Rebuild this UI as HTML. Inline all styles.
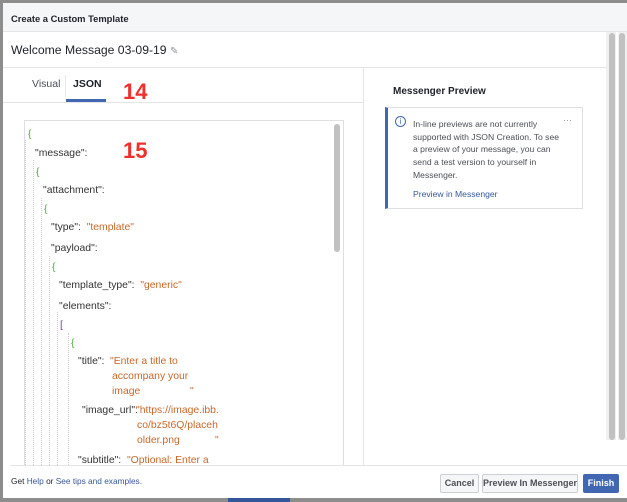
<!DOCTYPE html>
<html><head><meta charset="utf-8"><style>
*{margin:0;padding:0;box-sizing:border-box}
body{width:627px;height:502px;background:#8d8d8d;position:relative;overflow:hidden;font-family:"Liberation Sans",Helvetica,Arial,sans-serif;color:#1d2129}
.a{position:absolute;white-space:nowrap}
.m{position:absolute;left:3px;top:3px;width:624px;height:495px;background:#fff}
.code{font-size:10.4px;color:#333}
.s{color:#c8682b}
.g{color:#4caf3a}
.p{color:#7a3a9a}
.btn{position:absolute;top:474px;height:19px;border:1px solid #ccd0d5;background:#f5f6f7;border-radius:2px;font-size:9px;font-weight:bold;color:#4b4f56;text-align:center;line-height:17px;white-space:nowrap}
.guide{position:absolute;width:0;border-left:1px dotted #ccc}
</style></head><body>
<div class="m"></div>
<div class="a" style="left:3px;top:3px;width:624px;height:29px;background:#f5f6f7;border-bottom:1px solid #e5e5e5"></div>
<div class="a" style="left:11px;top:13px;font-size:9.4px;font-weight:bold;color:#1d2129">Create a Custom Template</div>
<div class="a" style="left:11px;top:43px;font-size:12.2px;color:#1d2129">Welcome Message 03-09-19 <span style="color:#90949c;font-size:10px">✎</span></div>
<div class="a" style="left:3px;top:67px;width:603px;height:1px;background:#e5e5e5"></div>
<div class="a" style="left:363px;top:68px;width:1px;height:397px;background:#e5e5e5"></div>
<div class="a" style="left:3px;top:102px;width:360px;height:1px;background:#e5e5e5"></div>
<div class="a" style="left:32px;top:78px;font-size:10.5px;color:#4b4f56">Visual</div>
<div class="a" style="left:65px;top:75px;width:1px;height:22px;background:#e5e5e5"></div>
<div class="a" style="left:73px;top:78px;font-size:10.5px;font-weight:bold;color:#1d2129">JSON</div>
<div class="a" style="left:66px;top:99px;width:40px;height:3px;background:#4267b2"></div>
<div class="a" style="left:123px;top:79px;font-size:22px;font-weight:bold;color:#f0302c">14</div>
<div class="a" style="left:123px;top:138px;font-size:22px;font-weight:bold;color:#f0302c">15</div>
<div class="a" style="left:24px;top:120px;width:320px;height:346px;border:1px solid #dddfe2;border-bottom:none"></div>
<div class="a" style="left:334px;top:124px;width:6px;height:128px;background:#c1c1c1;border-radius:3px"></div>
<div class="guide" style="left:25px;top:140px;height:325px"></div>
<div class="guide" style="left:33px;top:160px;height:305px"></div>
<div class="guide" style="left:41px;top:198px;height:267px"></div>
<div class="guide" style="left:49px;top:256px;height:209px"></div>
<div class="guide" style="left:57px;top:312px;height:153px"></div>
<div class="guide" style="left:68px;top:333px;height:132px"></div>
<div class="code">
<div class="a g" style="left:28px;top:129px">{</div>
<div class="a" style="left:35px;top:148px">"message":</div>
<div class="a g" style="left:36px;top:167px">{</div>
<div class="a" style="left:43px;top:185px">"attachment":</div>
<div class="a g" style="left:44px;top:204px">{</div>
<div class="a" style="left:51px;top:222px">"type": &nbsp;<span class="s">"template"</span></div>
<div class="a" style="left:51px;top:243px">"payload":</div>
<div class="a g" style="left:52px;top:262px">{</div>
<div class="a" style="left:59px;top:280px">"template_type": &nbsp;<span class="s">"generic"</span></div>
<div class="a" style="left:59px;top:301px">"elements":</div>
<div class="a p" style="left:60px;top:320px">[</div>
<div class="a g" style="left:71px;top:338px">{</div>
<div class="a" style="left:78px;top:356px">"title":</div>
<div class="a s" style="left:110px;top:356px">"Enter a title to</div>
<div class="a s" style="left:112px;top:371px">accompany your</div>
<div class="a s" style="left:112px;top:386px">image</div>
<div class="a s" style="left:190px;top:386px">"</div>
<div class="a" style="left:82px;top:405px">"image_url":</div>
<div class="a s" style="left:136px;top:405px">"https://image.ibb.</div>
<div class="a s" style="left:137px;top:420px">co/bz5t6Q/placeh</div>
<div class="a s" style="left:137px;top:435px">older.png</div>
<div class="a s" style="left:215px;top:435px">"</div>
<div class="a" style="left:78px;top:455px">"subtitle": &nbsp;<span class="s">"Optional: Enter a</span></div>
</div>
<div class="a" style="left:393px;top:86px;font-size:10px;font-weight:bold;color:#1d2129">Messenger Preview</div>
<div class="a" style="left:385px;top:107px;width:198px;height:102px;border:1px solid #dddfe2;border-left:3px solid #4267b2;background:#fff"></div>
<div class="a" style="left:395px;top:116px;width:11px;height:11px;border:1px solid #4267b2;border-radius:50%;font-size:8px;color:#4267b2;text-align:center;line-height:9px">i</div>
<div class="a" style="left:563px;top:115px;font-size:9px;color:#90949c">···</div>
<div class="a" style="left:413px;top:118px;font-size:8.6px;line-height:12.7px;color:#4b4f56;white-space:normal;width:152px">In-line previews are not currently supported with JSON Creation. To see a preview of your message, you can send a test version to yourself in Messenger.</div>
<div class="a" style="left:413px;top:189px;font-size:8.6px;color:#365899">Preview in Messenger</div>
<div class="a" style="left:606px;top:32px;width:21px;height:408px;background:#f0f0f0"></div>
<div class="a" style="left:609px;top:33px;width:6px;height:407px;background:#c1c1c1;border-radius:3px"></div>
<div class="a" style="left:619px;top:33px;width:6px;height:407px;background:#c1c1c1;border-radius:3px"></div>
<div class="a" style="left:616px;top:32px;width:2px;height:408px;background:#fff"></div>
<div class="a" style="left:10px;top:465px;width:617px;height:1px;background:#e5e5e5"></div>
<div class="a" style="left:11px;top:476px;font-size:8.3px;color:#1d2129">Get <span style="color:#365899">Help</span> or <span style="color:#365899">See tips and examples.</span></div>
<div class="btn" style="left:440px;width:39px">Cancel</div>
<div class="btn" style="left:482px;width:96px">Preview In Messenger</div>
<div class="btn" style="left:583px;width:36px;background:#4267b2;border-color:#4267b2;color:#fff">Finish</div>
<div class="a" style="left:0;top:498px;width:627px;height:4px;background:#8d8d8d"></div>
<div class="a" style="left:228px;top:498px;width:62px;height:4px;background:#34559a"></div>
</body></html>
